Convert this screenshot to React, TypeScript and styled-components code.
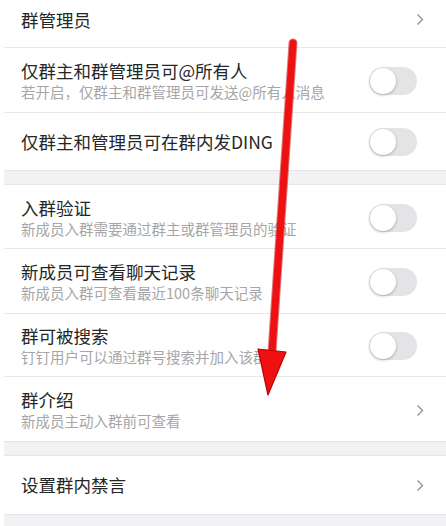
import styled, { createGlobalStyle } from "styled-components";

const GlobalStyle = createGlobalStyle`
  html, body {
    margin: 0;
    padding: 0;
    background: #ffffff;
    font-family: "Noto Sans CJK SC", "Noto Sans", sans-serif;
  }
`;

const Page = styled.div`
  position: relative;
  width: 446px;
  height: 526px;
  overflow: hidden;
  padding-left: 4px;
  box-sizing: border-box;
  background: #ffffff;
`;

const Group = styled.div`
  background: #ffffff;
`;

const Gap = styled.div<{ $h: number }>`
  height: ${(p) => p.$h}px;
  background: #f2f2f4;
  border-top: 1px solid #e6e6e8;
  border-bottom: 1px solid #e6e6e8;
  box-sizing: border-box;
`;

const Row = styled.div<{ $h: number; $pt?: number; $pb?: number }>`
  height: ${(p) => p.$h}px;
  box-sizing: border-box;
  display: flex;
  align-items: center;
  padding-top: ${(p) => p.$pt ?? 0}px;
  padding-bottom: ${(p) => p.$pb ?? 0}px;
  padding-left: 17px;
  padding-right: 22px;
  border-bottom: 1px solid #e8e8ea;
  &:last-child {
    border-bottom: none;
  }
`;

const Texts = styled.div`
  flex: 1;
  display: flex;
  flex-direction: column;
`;

const Title = styled.div`
  font-size: 17.5px;
  line-height: 22px;
  color: #262626;
`;

const Sub = styled.div`
  font-size: 14.5px;
  line-height: 20px;
  color: #a6a6a8;
`;

const Toggle = styled.div`
  width: 48px;
  height: 28px;
  border-radius: 14px;
  background: #e4e4e6;
  margin-right: 7px;
  position: relative;
  flex-shrink: 0;
  &::after {
    content: "";
    position: absolute;
    left: 1px;
    top: 1px;
    width: 26px;
    height: 26px;
    border-radius: 50%;
    background: #ffffff;
    box-shadow: 0 1px 3px rgba(0, 0, 0, 0.28);
  }
`;

const Chevron = () => (
  <svg width="8" height="13" viewBox="0 0 8 13">
    <path d="M1.5 1.5 L6.5 6.5 L1.5 11.5" fill="none" stroke="#8e8e92" strokeWidth="1.3" />
  </svg>
);

const ArrowLayer = styled.svg`
  position: absolute;
  left: 0;
  top: 0;
  pointer-events: none;
`;

type Item = {
  title: string;
  sub?: string;
  h: number;
  kind: "toggle" | "link";
  pt?: number;
  pb?: number;
};

const groups: { items: Item[]; gap: number }[] = [
  {
    items: [
      { title: "群管理员", h: 48, kind: "link", pb: 8 },
      { title: "仅群主和群管理员可@所有人", sub: "若开启，仅群主和群管理员可发送@所有人消息", h: 65, kind: "toggle", pt: 2 },
      { title: "仅群主和管理员可在群内发DING", h: 57, kind: "toggle" },
    ],
    gap: 15,
  },
  {
    items: [
      { title: "入群验证", sub: "新成员入群需要通过群主或群管理员的验证", h: 64, kind: "toggle", pt: 2 },
      { title: "新成员可查看聊天记录", sub: "新成员入群可查看最近100条聊天记录", h: 65, kind: "toggle", pt: 2 },
      { title: "群可被搜索", sub: "钉钉用户可以通过群号搜索并加入该群", h: 63, kind: "toggle", pt: 2 },
      { title: "群介绍", sub: "新成员主动入群前可查看", h: 64, kind: "link", pt: 2 },
    ],
    gap: 15,
  },
  {
    items: [{ title: "设置群内禁言", h: 58, kind: "link" }],
    gap: 20,
  },
];

export default function App() {
  return (
    <>
      <GlobalStyle />
      <Page>
        {groups.map((g, gi) => (
          <div key={gi}>
            <Group>
              {g.items.map((it, i) => (
                <Row key={i} $h={it.h} $pt={it.pt} $pb={it.pb}>
                  <Texts>
                    <Title>{it.title}</Title>
                    {it.sub && <Sub>{it.sub}</Sub>}
                  </Texts>
                  {it.kind === "toggle" ? <Toggle /> : <Chevron />}
                </Row>
              ))}
            </Group>
            <Gap $h={g.gap} />
          </div>
        ))}
        <ArrowLayer width="446" height="526" viewBox="0 0 446 526">
          <path
            d="M293 43 L272 352"
            stroke="#b80000"
            strokeWidth="9"
            strokeLinecap="round"
            opacity="0.5"
          />
          <path d="M293 43 L272 352" stroke="#ee1111" strokeWidth="7" strokeLinecap="round" />
          <polygon
            points="258,349 286,352 268,395"
            fill="#ee1111"
            stroke="#c00000"
            strokeWidth="1.2"
            strokeLinejoin="round"
          />
        </ArrowLayer>
      </Page>
    </>
  );
}
